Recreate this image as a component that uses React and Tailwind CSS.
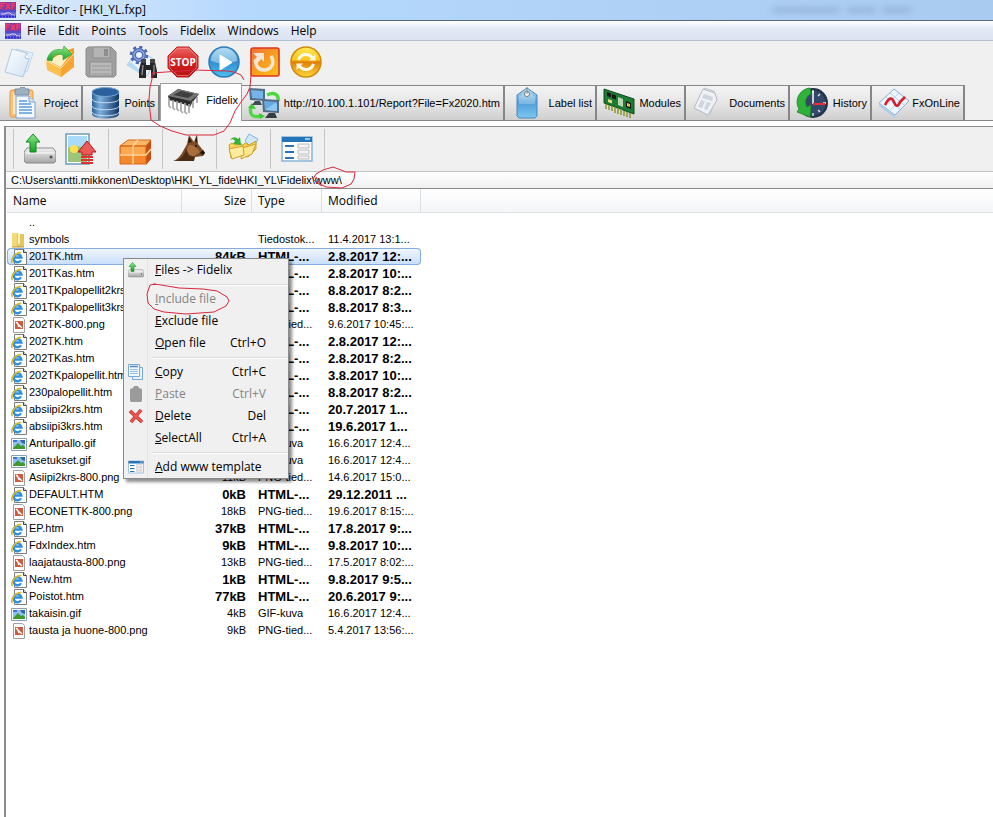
import { useState } from "react";

const menus = ["File", "Edit", "Points", "Tools", "Fidelix", "Windows", "Help"];

const files = [
    { name: "symbols", kind: "folder", size: "", type: "Tiedostok...", modified: "11.4.2017 13:1..." },
    { name: "201TK.htm", kind: "htm", size: "84kB", type: "HTML-...", modified: "2.8.2017 12:..." },
    { name: "201TKas.htm", kind: "htm", size: "", type: "HTML-...", modified: "2.8.2017 10:..." },
    { name: "201TKpalopellit2krs", kind: "htm", size: "", type: "HTML-...", modified: "8.8.2017 8:2..." },
    { name: "201TKpalopellit3krs", kind: "htm", size: "", type: "HTML-...", modified: "8.8.2017 8:3..." },
    { name: "202TK-800.png", kind: "png", size: "", type: "PNG-tied...", modified: "9.6.2017 10:45:..." },
    { name: "202TK.htm", kind: "htm", size: "", type: "HTML-...", modified: "2.8.2017 12:..." },
    { name: "202TKas.htm", kind: "htm", size: "", type: "HTML-...", modified: "2.8.2017 8:2..." },
    { name: "202TKpalopellit.htm", kind: "htm", size: "", type: "HTML-...", modified: "3.8.2017 10:..." },
    { name: "230palopellit.htm", kind: "htm", size: "", type: "HTML-...", modified: "8.8.2017 8:2..." },
    { name: "absiipi2krs.htm", kind: "htm", size: "", type: "HTML-...", modified: "20.7.2017 1..." },
    { name: "absiipi3krs.htm", kind: "htm", size: "", type: "HTML-...", modified: "19.6.2017 1..." },
    { name: "Anturipallo.gif", kind: "gif", size: "", type: "GIF-kuva", modified: "16.6.2017 12:4..." },
    { name: "asetukset.gif", kind: "gif", size: "", type: "GIF-kuva", modified: "16.6.2017 12:4..." },
    { name: "Asiipi2krs-800.png", kind: "png", size: "11kB", type: "PNG-tied...", modified: "14.6.2017 15:0..." },
    { name: "DEFAULT.HTM", kind: "htm", size: "0kB", type: "HTML-...", modified: "29.12.2011 ..." },
    { name: "ECONETTK-800.png", kind: "png", size: "18kB", type: "PNG-tied...", modified: "19.6.2017 8:15:..." },
    { name: "EP.htm", kind: "htm", size: "37kB", type: "HTML-...", modified: "17.8.2017 9:..." },
    { name: "FdxIndex.htm", kind: "htm", size: "9kB", type: "HTML-...", modified: "9.8.2017 10:..." },
    { name: "laajatausta-800.png", kind: "png", size: "13kB", type: "PNG-tied...", modified: "17.5.2017 8:02:..." },
    { name: "New.htm", kind: "htm", size: "1kB", type: "HTML-...", modified: "9.8.2017 9:5..." },
    { name: "Poistot.htm", kind: "htm", size: "77kB", type: "HTML-...", modified: "20.6.2017 9:..." },
    { name: "takaisin.gif", kind: "gif", size: "4kB", type: "GIF-kuva", modified: "16.6.2017 12:4..." },
    { name: "tausta ja huone-800.png", kind: "png", size: "9kB", type: "PNG-tied...", modified: "5.4.2017 13:56:..." },
];

/* ---------- shared gradients ---------- */
function Gradients() {
    return (
        <svg className="absolute w-0 h-0" aria-hidden="true">
            <defs>
                <linearGradient id="gOrange" x1="0" y1="0" x2="1" y2="1">
                    <stop offset="0" stopColor="#f0703a" />
                    <stop offset=".6" stopColor="#f8a51c" />
                    <stop offset="1" stopColor="#f6c420" />
                </linearGradient>
                <linearGradient id="gGold" x1="0" y1="0" x2="0" y2="1">
                    <stop offset="0" stopColor="#ffe95a" />
                    <stop offset=".42" stopColor="#ffc61a" />
                    <stop offset=".5" stopColor="#e07f08" />
                    <stop offset="1" stopColor="#ffd93a" />
                </linearGradient>
                <linearGradient id="gBlue" x1="0" y1="0" x2="0" y2="1">
                    <stop offset="0" stopColor="#9fd2ee" />
                    <stop offset=".5" stopColor="#2f8fd0" />
                    <stop offset="1" stopColor="#4fc0ee" />
                </linearGradient>
                <linearGradient id="gDb" x1="0" y1="0" x2="1" y2="0">
                    <stop offset="0" stopColor="#2c5f96" />
                    <stop offset=".3" stopColor="#7fb0de" />
                    <stop offset="1" stopColor="#0f3566" />
                </linearGradient>
                <linearGradient id="gRed" x1="0" y1="0" x2="0" y2="1">
                    <stop offset="0" stopColor="#ee6a66" />
                    <stop offset=".5" stopColor="#d01f20" />
                    <stop offset="1" stopColor="#b81414" />
                </linearGradient>
                <linearGradient id="gGreen" x1="0" y1="0" x2="0" y2="1">
                    <stop offset="0" stopColor="#8fe887" />
                    <stop offset="1" stopColor="#16a024" />
                </linearGradient>
                <linearGradient id="gDrive" x1="0" y1="0" x2="0" y2="1">
                    <stop offset="0" stopColor="#f4f4f4" />
                    <stop offset="1" stopColor="#a5a5a5" />
                </linearGradient>
                <linearGradient id="gPage" x1="0" y1="0" x2="1" y2="1">
                    <stop offset="0" stopColor="#ffffff" />
                    <stop offset="1" stopColor="#cfe2f4" />
                </linearGradient>
                <linearGradient id="gTag" x1="0" y1="0" x2="0" y2="1">
                    <stop offset="0" stopColor="#bfe0f5" />
                    <stop offset=".5" stopColor="#4f9fd8" />
                    <stop offset="1" stopColor="#7cc8f0" />
                </linearGradient>
            </defs>
        </svg>
    );
}

function Svg({ small, children }) {
    return (
        <svg viewBox={small ? "0 0 16 16" : "0 0 32 32"} className={small ? "w-4 h-4 shrink-0" : "w-8 h-8 shrink-0"} aria-hidden="true">
            {children}
        </svg>
    );
}

/* ---------- main toolbar icons ---------- */
const LogoIcon = () => (
    <Svg small>
        <rect width="16" height="16" fill="#6a62d0" />
        <path d="M0 0h16v8H0z" fill="#8a3a9a" />
        <path d="M1 7V1.500h4M1 4h3M6 1.500L10 7M10 1.500L6 7M12 7V1.500h3M12 4h3" stroke="#f23a6a" strokeWidth="1.400" fill="none" />
        <path d="M0 9h16" stroke="#4a45c8" strokeWidth="1.500" />
        <path d="M1 12h4l1-1h4l2 2h3" stroke="#d9d6f4" fill="none" />
        <path d="M0 14.500h16" stroke="#2a2ad8" strokeWidth="2" strokeDasharray="2 1" />
    </Svg>
);

const NewIcon = () => (
    <Svg>
        <path d="M13 3l17 4-6 19-14-3z" fill="#e4eef9" stroke="#c3d6e9" />
        <path d="M9 3l15 4 2 6-6 18L2 26z" fill="url(#gPage)" stroke="#b0c9e2" />
        <path d="M24 7l-2 5 4 1" fill="#fff" stroke="#a3c0dc" />
    </Svg>
);

const OpenIcon = () => (
    <Svg>
        <path d="M2 15L17 6l13-4v18L17 31z" fill="#f59a22" />
        <path d="M4 15l12-7 12-2-11 15z" fill="#fff0c4" />
        <path d="M2 15l15 7v9L3 24z" fill="#fbc04e" />
        <path d="M17 22L30 8v13L17 31z" fill="#f7a530" />
        <path d="M2 15l15 7L30 8" fill="none" stroke="#fff2cf" strokeWidth=".8" />
        <path d="M3 14C5 5 12 2 19 4l1-4 8 8-9 6v-5C13 7 9 9 8 15z" fill="url(#gGreen)" stroke="#3aa53c" strokeWidth=".7" />
    </Svg>
);

const SaveIcon = () => (
    <Svg>
        <path d="M1 3l2-2h23l5 5v23l-2 2H3l-2-2z" fill="#a0a0a0" stroke="#8c8c8c" />
        <path d="M8 1h17v11H8z" fill="#b4b4b4" stroke="#8f8f8f" />
        <path d="M19 3h4v7h-4z" fill="#8e8e8e" />
        <path d="M5 16h22v14H5z" fill="#b9b9b9" stroke="#8f8f8f" />
        <path d="M7 20h18M7 24h18M7 28h18" stroke="#989898" />
    </Svg>
);

const FindIcon = () => (
    <Svg>
        <path d="M12 4l17 10-8 16L1 19z" fill="#eaf4fc" stroke="#a6cbe8" />
        <path d="M1 19l4-3 14 13 1 3z" fill="#b4daf6" />
        <circle cx="13" cy="9" r="5" fill="none" stroke="#4a66b4" strokeWidth="4" />
        <circle cx="13" cy="9" r="8" fill="none" stroke="#4a66b4" strokeWidth="2.500" strokeDasharray="3.140 3.140" />
        <circle cx="13" cy="9" r="5" fill="none" stroke="#93a9de" strokeWidth="1.500" />
        <path d="M15 16h5v3h4v-3h5l2 9v7h-6v-8h-5v8h-7v-8z" fill="#262626" />
        <path d="M17 19l-1 10M28 19v10" stroke="#8d8d8d" strokeWidth="1.400" />
        <path d="M15 13h5v4h-5zM24 13h5v4h-5z" fill="#444" />
    </Svg>
);

const StopIcon = () => (
    <Svg>
        <path d="M10 1h12l9 9v12l-9 9H10l-9-9V10z" fill="url(#gRed)" stroke="#c02222" />
        <path d="M10.500 2.500h11l8 8v11l-8 8h-11l-8-8v-11z" fill="none" stroke="#f08a86" strokeWidth=".7" />
        <text x="16" y="20" textAnchor="middle" fontSize="10" fontWeight="700" fill="#fff" fontFamily="Open Sans, sans-serif">
            STOP
        </text>
    </Svg>
);

const PlayIcon = () => (
    <Svg>
        <circle cx="16" cy="16" r="15" fill="url(#gBlue)" stroke="#2d7bb8" strokeWidth="1.500" />
        <path d="M3 15a13 13 0 0 1 26 0Q16 20 3 15z" fill="#cbe8f8" opacity=".5" />
        <path d="M12 9l12 7.500L12 24z" fill="#fff" stroke="#fff" strokeLinejoin="round" />
    </Svg>
);

const RestartIcon = () => (
    <Svg>
        <rect x="2" y="2" width="28" height="28" rx="2" fill="url(#gOrange)" stroke="#e0361e" strokeWidth="1.600" />
        <path d="M22 10c4 6 1 14-7 14-6 0-9-5-8-10" fill="none" stroke="#f3e6d6" strokeWidth="3.500" />
        <path d="M4 7h11v9l-3-3-4 5-4-3 4-4z" fill="#f3e6d6" />
    </Svg>
);

const SyncIcon = () => (
    <Svg>
        <circle cx="16" cy="16" r="15" fill="url(#gGold)" stroke="#d38a0c" strokeWidth="1.500" />
        <path d="M8.500 14a7.800 7.800 0 0 1 14-2M23.500 18a7.800 7.800 0 0 1-14 2" fill="none" stroke="#fffbe6" strokeWidth="3" />
        <path d="M19 14.500h6.500V8zM13 17.500H6.500V24z" fill="#fffbe6" />
    </Svg>
);

/* ---------- tab icons ---------- */
const ProjectIcon = () => (
    <Svg>
        <rect x="4" y="3" width="23" height="27" rx="2" fill="#f9c37a" stroke="#e89a35" />
        <rect x="7" y="6" width="17" height="21" fill="#fdebcf" />
        <path d="M9 2h4l2-2h3l2 2h3v6H9z" fill="#9fb0c4" stroke="#6f8299" strokeWidth=".8" />
        <path d="M10 9h13l6 6v16H10z" fill="#f3f9ff" stroke="#7aa4d4" />
        <path d="M23 9v6h6" fill="#cfe1f6" stroke="#7aa4d4" />
        <path d="M13 14h8M13 17h12M13 20h13M13 23h13M13 26h13" stroke="#5d9ad8" strokeWidth="1.400" />
    </Svg>
);

const DatabaseIcon = () => (
    <Svg>
        <path d="M3 5v22c0 6 27 6 27 0V5z" fill="url(#gDb)" />
        <ellipse cx="16.500" cy="5" rx="13.500" ry="4.500" fill="#2b609c" stroke="#7aa8d6" />
        <path d="M3 12c0 5 27 5 27 0M3 19c0 5 27 5 27 0M3 25c0 5 27 5 27 0" fill="none" stroke="#c9dff2" />
    </Svg>
);

const ChipIcon = () => (
    <Svg>
        <path d="M1 11L11 4l21 5-7 9-2 4z" fill="#3c3c3c" />
        <path d="M1 11L11 4l21 5-9 7z" fill="#777" />
        <path d="M6 10l8-4 13 3-6 4z" fill="#3f3f3f" />
        <path d="M1 11l22 5v5L2 15z" fill="#2a2a2a" />
        <path d="M2 13v8l2 2M6 15v8l2 2M10 16v8l2 2M14 17v9l2 2M18 18v9l2 2M22 19v9M26 16v7M30 12v6" stroke="#a5a5a5" strokeWidth="1.700" fill="none" />
    </Svg>
);

const NetworkIcon = () => (
    <Svg>
        <path d="M19 8c7-3 12-1 11 6M13 29C5 31 1 28 3 20" fill="none" stroke="#4fd843" strokeWidth="3.500" />
        <path d="M0 21l4-5 4 6zM11 26l6 3-5 3z" fill="#3cc835" />
        <path d="M1 1l16 1v12L2 13z" fill="#536c85" />
        <path d="M3 3l12 1v8L4 11z" fill="#75b4e8" />
        <path d="M7 14h5l2 4H4z" fill="#3e4a58" />
        <path d="M14 12l17 1v13l-16-1z" fill="#536c85" />
        <path d="M16 14l13 1v9l-12-1z" fill="#67a9e0" />
        <path d="M17 23l10-7 2 1v7z" fill="#8cc8f2" />
        <path d="M21 26h6l2 5H17z" fill="#343c46" />
    </Svg>
);

const LabelIcon = () => (
    <Svg>
        <path d="M16 1l10 7v21l-2 2H8l-2-2V8z" fill="url(#gTag)" stroke="#4b87b8" />
        <path d="M8 10l8-6 8 6v7H8z" fill="#fff" opacity=".25" />
        <circle cx="16" cy="7" r="2.500" fill="#fff" stroke="#777" />
        <path d="M16 7V0" stroke="#888" />
    </Svg>
);

const BoardIcon = () => (
    <Svg>
        <path d="M1 2l30 10v15L1 16z" fill="#1f7a34" stroke="#0d4d1d" />
        <path d="M3 17v5M6 18v5M9 19v5M12 20v6M15 21v6M18 22v6M21 24v5M24 25v5M27 26v5" stroke="#8f9a38" strokeWidth="1.600" />
        <path d="M4 5l4 1.500v4L4 9zM9 7l4 1.500v4L9 11zM23 14l5 2v6l-5-2z" fill="#161616" />
        <path d="M5 12l4 1.500v3L5 15z" fill="#e8e27c" />
        <path d="M15 10l5 2v8l-5-2z" fill="#b9d6ae" />
        <path d="M24 16l3 1v3l-3-1z" fill="#d9ce4c" />
    </Svg>
);

const DocumentsIcon = () => (
    <Svg>
        <path d="M12 1l10 3 2 7-7 19-3-2z" fill="#dfe3e9" stroke="#c3c9d2" />
        <path d="M11 2l12 4 2 7-9 15L2 21z" fill="#eef1f5" stroke="#b3bac5" />
        <path d="M12 7l9 3-1 4-10-3zM9 13l4 1-3 7-4-1zM15 15l4 1-4 7-3-1z" fill="#cfd5dd" />
    </Svg>
);

const HistoryIcon = () => (
    <Svg>
        <circle cx="17" cy="16" r="15" fill="#24344c" />
        <circle cx="17" cy="16" r="12.500" fill="#34496a" />
        <path d="M17 3v3M17 26v3M27 16h3M24 7l-2 2M24 25l-2-2" stroke="#dfe6ef" strokeWidth="1.400" />
        <path d="M14 1C3 2-2 14 3 22l-2 3 13 5 1-12-4 2C8 15 10 9 15 7z" fill="#2fb23a" stroke="#1c8428" strokeWidth=".8" />
        <path d="M17 4v13" stroke="#fff" strokeWidth="1.500" />
        <path d="M17 17h12" stroke="#f02a34" strokeWidth="2" />
    </Svg>
);

const OnlineIcon = () => (
    <Svg>
        <path d="M16 2l15 12-14 14L1 16z" fill="#edf5fd" stroke="#8ab0d8" />
        <path d="M1 16l16 12v3L1 19z" fill="#b0cce8" />
        <path d="M12 6l14 12M8 10l14 12M21 6L6 20M26 10L11 24" stroke="#b9d3ee" />
        <path d="M7 18c4-8 7-8 9-3s4 5 6 0l5-5" fill="none" stroke="#d3202e" strokeWidth="2.600" />
    </Svg>
);

/* ---------- file panel icons ---------- */
const UploadIcon = ({ small }) => (
    <svg viewBox="0 0 32 32" className={small ? "w-4 h-4" : "w-8 h-8"} aria-hidden="true">
        <path d="M3 15h26l3 4v9l-2 2H2l-2-2v-9z" fill="url(#gDrive)" stroke="#8a8a8a" />
        <path d="M2 20h28" stroke="#fff" />
        <circle cx="27" cy="24" r="1.500" fill="#555" />
        <path d="M9 1l7 8h-4v10H6V9H2z" fill="url(#gGreen)" stroke="#0c8a1c" />
    </svg>
);

const ImageUpIcon = () => (
    <Svg>
        <path d="M1 1h23v30H1z" fill="#fff" stroke="#6e9cba" strokeWidth="1.500" />
        <path d="M3 3h19v14H3z" fill="#a9dbf8" />
        <path d="M3 15c8-3 13 0 19-2v16H3z" fill="#9cc47a" />
        <circle cx="9" cy="16" r="4" fill="#ffe34c" />
        <path d="M22 8l9 11h-4v3H17v-3h-4z" fill="#ea5a58" stroke="#b01818" />
        <path d="M16 24h12M16 27h12M16 30h12" stroke="#dc3232" strokeWidth="2" />
    </Svg>
);

const BoxIcon = () => (
    <Svg>
        <path d="M1 13l8-6h23l-5 6z" fill="#fbb765" stroke="#d9661a" />
        <path d="M27 13l5-6v19l-5 6z" fill="#c94b12" />
        <path d="M1 13h26v18H1z" fill="#f58a2c" stroke="#d9661a" />
        <path d="M2 14h11v7H2zM15 14h11v7H15z" fill="#fba94e" />
        <path d="M14 13v18M1 22h26l5-6M14 13l5-6" stroke="#ffd59b" strokeWidth="1.500" fill="none" />
    </Svg>
);

const DogIcon = () => (
    <Svg>
        <path d="M0 28c7-2 10-10 14-17l2-9 5 7 3-8 1 10c3 4 6 7 7 9l-2 3-8 1c-2 1-3 3-1 4z" fill="#7c4a24" />
        <path d="M16 4l3 5-4 1zM24 3l0 7-2-2z" fill="#2d1a0c" />
        <path d="M15 13c4-3 9 1 12 6l-6 4-9 3z" fill="#a86e3e" />
        <path d="M2 28c6-2 9-5 11-12l3 6 6 2-1 4z" fill="#4d2b14" />
        <path d="M30 17l2 3-2 2-3-2z" fill="#151515" />
        <circle cx="23" cy="13" r="1" fill="#111" />
    </Svg>
);

const FolderSyncIcon = () => (
    <Svg>
        <path d="M18 8l4-7 9 5-5 10z" fill="#cfe8fa" stroke="#7eb5de" />
        <path d="M14 14l4-4 4 2 7-4v8l-8 8-8-2z" fill="#f6cf4e" stroke="#d0a02c" />
        <path d="M15 15l14-4-4 10-11 5z" fill="#fde78e" stroke="#d0a02c" />
        <path d="M2 12l3-2 3 2 7-1v11L4 25z" fill="#f8d65a" stroke="#d0a02c" />
        <path d="M2 16l14-3 1 9-12 4z" fill="#fdec9c" stroke="#d0a02c" />
        <path d="M3 7c3-4 6-3 8-1l2-2 1 8-8-1 2-3C7 6 5 6 3 7z" fill="#36b337" />
    </Svg>
);

const TemplateIcon = ({ small }) => (
    <svg viewBox="0 0 32 32" className={small ? "w-4 h-4" : "w-8 h-8"} aria-hidden="true">
        <path d="M1 4h30v24H1z" fill="#fff" stroke="#88b4d6" strokeWidth="1.500" />
        <path d="M1 4h30v5H1z" fill="#2674b8" />
        <path d="M24 6h5" stroke="#b9def8" strokeWidth="1.500" />
        <path d="M4 13h9M4 19h9M4 25h9" stroke="#2774bb" strokeWidth="2" />
        <path d="M17 11h11v4H17zM17 17h11v4H17zM17 23h11v3H17z" fill="#f4f4f4" stroke="#bbb" />
    </svg>
);

/* ---------- small icons ---------- */
const FileIcon = ({ kind }) => {
    if (kind === "folder") {
        return (
            <Svg small>
                <path d="M1 1h6v14H1z" fill="#f2da79" />
                <path d="M6 2h7v13H6z" fill="#e6c65a" />
                <path d="M7 0l2 1v10l-2 2z" fill="#fff4bd" />
                <path d="M1 15h12" stroke="#b9993a" />
            </Svg>
        );
    }
    if (kind === "png") {
        return (
            <Svg small>
                <path d="M2.500.5h9l2 2v13h-11z" fill="#fff" stroke="#a0a0a0" />
                <path d="M4 4h8v8H4z" fill="#cf5a3c" />
                <path d="M5 5l6 6M6 5l2 5" stroke="#fff" strokeWidth="1.300" />
            </Svg>
        );
    }
    if (kind === "gif") {
        return (
            <Svg small>
                <path d="M.5 2.500h15v12H.5z" fill="#fff" stroke="#8ba0ae" />
                <path d="M2 4h12v9H2z" fill="#8fc0f0" />
                <path d="M2 12l5-5 3 3 2-1 2 2v2H2z" fill="#3f9a2c" />
                <path d="M9 4h5v4l-3-1z" fill="#2f6aa8" />
                <path d="M2 4h4v2H2z" fill="#3a78d0" />
            </Svg>
        );
    }
    return (
        <Svg small>
            <path d="M3.500.5h9l3 3v12h-12z" fill="#fff" stroke="#7d7d7d" />
            <path d="M12.500.5v3h3" fill="#ddd" stroke="#444" />
            <path d="M10 11.200A4 4 0 1 1 10.400 8.500H3.500" fill="none" stroke="#2f8fe0" strokeWidth="2.400" />
            <path d="M1.500 14C-1 11 4 3 10.500 3.500" fill="none" stroke="#d8bc2c" strokeWidth="1.600" />
        </Svg>
    );
};

const CopyIcon = () => (
    <Svg small>
        <path d="M4.500 3.500h10v12h-10z" fill="#e8f2fc" stroke="#79a8d2" />
        <path d="M.5.5h11v12H.5z" fill="#f4f9fe" stroke="#79a8d2" />
        <path d="M2 2.500h8" stroke="#4a86bd" strokeWidth="1.500" />
        <path d="M2 5.500h8M2 7.500h8M2 9.500h8" stroke="#94bbdf" />
    </Svg>
);

const PasteIcon = () => (
    <Svg small>
        <path d="M2 3l3-1 1-2h4l1 2 3 1v12l-1 1H3l-1-1z" fill="#9b9b9b" />
    </Svg>
);

const DeleteIcon = () => (
    <Svg small>
        <path d="M2 3l12 11M13 2L3 14" stroke="#b81f1f" strokeWidth="3.500" />
        <path d="M2 3l12 11M13 2L3 14" stroke="#f05a52" strokeWidth="2" />
    </Svg>
);

const toolbar = [
    { label: "New", Icon: NewIcon },
    { label: "Open", Icon: OpenIcon },
    { label: "Save", Icon: SaveIcon },
    { label: "Find", Icon: FindIcon },
    { label: "Stop", Icon: StopIcon },
    { label: "Run", Icon: PlayIcon },
    { label: "Restart", Icon: RestartIcon },
    { label: "Refresh", Icon: SyncIcon },
];

const tabs = [
    { label: "Project", Icon: ProjectIcon, width: "w-[83px]" },
    { label: "Points", Icon: DatabaseIcon, width: "w-[77px]" },
    { label: "Fidelix", Icon: ChipIcon, width: "w-[82px]" },
    { label: "http://10.100.1.101/Report?File=Fx2020.htm", Icon: NetworkIcon, width: "w-[263px]" },
    { label: "Label list", Icon: LabelIcon, width: "w-[92px]" },
    { label: "Modules", Icon: BoardIcon, width: "w-[89px]" },
    { label: "Documents", Icon: DocumentsIcon, width: "w-[104px]" },
    { label: "History", Icon: HistoryIcon, width: "w-[82px]" },
    { label: "FxOnLine", Icon: OnlineIcon, width: "w-[93px]" },
];

const panelGroups = [
    [
        { label: "Upload", Icon: UploadIcon },
        { label: "Upload image", Icon: ImageUpIcon },
    ],
    [{ label: "Package", Icon: BoxIcon }],
    [{ label: "Watchdog", Icon: DogIcon }],
    [{ label: "Sync folders", Icon: FolderSyncIcon }],
    [{ label: "Templates", Icon: TemplateIcon }],
];

const contextItems = [
    { key: "F", rest: "iles -> Fidelix", icon: <UploadIcon small /> },
    null,
    { key: "I", rest: "nclude file", disabled: true },
    { key: "E", rest: "xclude file" },
    { key: "O", rest: "pen file", shortcut: "Ctrl+O" },
    null,
    { key: "C", rest: "opy", shortcut: "Ctrl+C", icon: <CopyIcon /> },
    { key: "P", rest: "aste", shortcut: "Ctrl+V", icon: <PasteIcon />, disabled: true },
    { key: "D", rest: "elete", shortcut: "Del", icon: <DeleteIcon /> },
    { key: "S", rest: "electAll", shortcut: "Ctrl+A" },
    null,
    { key: "A", rest: "dd www template", icon: <TemplateIcon small /> },
];

function ContextMenu() {
    return (
        <div role="menu" className="absolute left-[123px] top-[258px] w-[166px] border border-[#8a8a8a] bg-[#f0f0f0] shadow-[3px_3px_3px_rgba(0,0,0,0.45)] font-['Open_Sans',sans-serif] text-[12px]">
            {contextItems.map((item, i) =>
                item ? (
                    <button
                        key={i}
                        role="menuitem"
                        disabled={item.disabled}
                        className="flex w-full h-[22px] items-center pr-[22px] text-left whitespace-nowrap text-black disabled:text-[#838383]"
                    >
                        <span className="flex w-6 h-full shrink-0 items-center pl-1 border-r border-[#e2e3e3]">{item.icon}</span>
                        <span className="flex-1 pl-[7px]">
                            <span className="underline">{item.key}</span>
                            {item.rest}
                        </span>
                        <span>{item.shortcut}</span>
                    </button>
                ) : (
                    <div key={i} className="flex h-[7px]">
                        <div className="w-6 shrink-0 border-r border-[#e2e3e3]" />
                        <div className="flex-1 pl-1 pt-[3px]">
                            <div className="h-[2px] border-t border-[#dadada] bg-white" />
                        </div>
                    </div>
                )
            )}
        </div>
    );
}

// hand drawn pen marks over the window
function PenMarks() {
    return (
        <svg className="absolute left-0 top-0 w-full h-full pointer-events-none" fill="none" stroke="#d8283c" strokeWidth="1" aria-hidden="true">
            <path d="M244 80l-3-5-7-3-6-1-34-1-28 2-14 1v6l-2 8-1 12 1 12 1 9 9 6 12 5 14 4h28l10-4 6-8 5-12 6-9 6-8 3-7 1-12" />
            <path d="M322 186l-6-4-3-3 3-5 7-4 10-3 8 3 5 2h9l-1 7-3 5-9 4-16-1-6-3-4-7" />
            <path d="M156 284l-6 1-3 9 1 9 6 6 10 3 22 2 28-2 12-6 3-5-2-4-10-6-14-2-24-1-18-3-8-1" />
        </svg>
    );
}

function FileRow({ file, selected, onSelect }) {
    const weight = file.kind === "htm" ? "font-bold text-[13px]" : "";
    const mark = selected ? "border-[#84acdd] bg-gradient-to-b from-[#eff6fe] to-[#c9dffa]" : "border-transparent";
    return (
        <tr onClick={onSelect} className="leading-[15px]">
            <td className={`p-0 pl-[3px] border-y border-l rounded-l-sm ${mark}`}>
                <div className="flex h-[15px] items-center gap-[2px] whitespace-nowrap">
                    <FileIcon kind={file.kind} />
                    <span>{file.name}</span>
                </div>
            </td>
            <td className={`p-0 pr-[6px] border-y text-right ${mark}`}>
                <div className={`h-[15px] ${weight}`}>{file.size}</div>
            </td>
            <td className={`p-0 pl-[6px] border-y ${mark}`}>
                <div className={`h-[15px] ${weight}`}>{file.type}</div>
            </td>
            <td className={`p-0 pl-[6px] border-y border-r rounded-r-sm whitespace-nowrap ${mark}`}>
                <div className={`h-[15px] ${weight}`}>{file.modified}</div>
            </td>
            <td className="p-0" />
        </tr>
    );
}

export default function App() {
    const [selected, setSelected] = useState("201TK.htm");
    const [activeTab, setActiveTab] = useState("Fidelix");

    return (
        <div className="relative flex flex-col min-h-screen overflow-hidden bg-white font-['Liberation_Sans',Arial,sans-serif] text-[11px] text-black cursor-default">
            <Gradients />

            {/* Title bar */}
            <header className="flex h-[21px] items-center gap-[3px] border-b border-[#56687c] bg-gradient-to-r from-[#dcebfb] via-[#b5d8fd] via-25% to-[#a9cbef] font-['Open_Sans',sans-serif] text-[12px]">
                <LogoIcon />
                <h1>FX-Editor - [HKI_YL.fxp]</h1>
                <div className="flex gap-2 ml-auto mr-[82px] blur-[3px]">
                    <span className="w-[66px] h-1 bg-[#8eadd0]" />
                    <span className="w-7 h-1 bg-[#8eadd0]" />
                    <span className="w-7 h-1 bg-[#8eadd0]" />
                </div>
            </header>

            {/* Menu bar */}
            <nav className="flex h-5 items-center border-b border-[#b3bfd3] bg-gradient-to-b from-white via-[#e4eaf5] via-40% to-[#dbe2f1] pl-[5px] font-['Open_Sans',sans-serif] text-[12px]">
                <LogoIcon />
                {menus.map((m) => (
                    <button key={m} className="px-[6px]">
                        {m}
                    </button>
                ))}
            </nav>

            {/* Main toolbar */}
            <div className="bg-[#f0f0f0]">
                <div className="flex h-[42px] items-center">
                    {toolbar.map(({ label, Icon }) => (
                        <button key={label} aria-label={label} className="flex w-[41px] justify-center pr-1">
                            <Icon />
                        </button>
                    ))}
                </div>

                {/* Tabs */}
                <div role="tablist" className="flex items-end">
                    {tabs.map(({ label, Icon, width }) => (
                        <button
                            key={label}
                            role="tab"
                            aria-selected={activeTab === label}
                            onClick={() => setActiveTab(label)}
                            className={`flex shrink-0 items-center justify-between pl-[6px] pr-[3px] whitespace-nowrap ${width}
                                ${activeTab === label
                                    ? "h-[38px] bg-white border-t border-x border-[#a0a0a0] pb-1"
                                    : "h-9 border border-l-0 border-r-2 border-[#868686] bg-gradient-to-b from-[#f4f4f4] via-[#e6e6e6] via-50% to-[#cfcfcf]"
                                }`}
                        >
                            <Icon />
                            <span>{label}</span>
                        </button>
                    ))}
                    <div className="flex-1 border-b border-[#868686]" />
                </div>
            </div>

            {/* File panel */}
            <main className="flex flex-col flex-1 mt-[5px] ml-1 border-t border-l-2 border-[#8c8c8c]">
                <div className="flex h-11 items-center bg-[#f0f0f0] pl-[7px]">
                    {panelGroups.map((group, i) => (
                        <div key={i} className={`flex h-10 items-center border-l border-[#c4c4c4] ${i === 0 ? "w-[95px] gap-[9px] pl-[10px]" : "w-[54px] pl-[10px]"}`}>
                            {group.map(({ label, Icon }) => (
                                <button key={label} aria-label={label}>
                                    <Icon />
                                </button>
                            ))}
                        </div>
                    ))}
                    <div className="h-10 border-l border-[#c4c4c4]" />
                </div>

                <div className="h-[18px] border-t border-b border-t-[#c4c4c4] border-b-[#8c8c8c] bg-gradient-to-b from-white to-[#f0f0f0] pl-[5px] leading-[17px]">
                    C:\Users\antti.mikkonen\Desktop\HKI_YL_fide\HKI_YL\Fidelix\www\
                </div>

                <table className="w-full table-fixed border-separate border-spacing-0 ml-px">
                    <colgroup>
                        <col className="w-[175px]" />
                        <col className="w-[70px]" />
                        <col className="w-[70px]" />
                        <col className="w-[99px]" />
                        <col />
                    </colgroup>
                    <thead>
                        <tr className="h-6 text-left font-['Open_Sans',sans-serif] text-[12px] bg-gradient-to-b from-white to-[#f4f5f7]">
                            <th className="p-0 pl-[6px] font-normal border-r border-b border-[#dcdfe3]">Name</th>
                            <th className="p-0 pr-[5px] font-normal text-right border-r border-b border-[#dcdfe3]">Size</th>
                            <th className="p-0 pl-[6px] font-normal border-r border-b border-[#dcdfe3]">Type</th>
                            <th className="p-0 pl-[6px] font-normal border-r border-b border-[#dcdfe3]">Modified</th>
                            <th className="p-0 border-b border-[#dcdfe3]" />
                        </tr>
                    </thead>
                    <tbody>
                        <tr>
                            <td colSpan={5} className="p-0 h-[18px] pl-[22px]">..</td>
                        </tr>
                        {files.map((f) => (
                            <FileRow key={f.name} file={f} selected={selected === f.name} onSelect={() => setSelected(f.name)} />
                        ))}
                    </tbody>
                </table>
            </main>

            <ContextMenu />
            <PenMarks />
        </div>
    );
}
